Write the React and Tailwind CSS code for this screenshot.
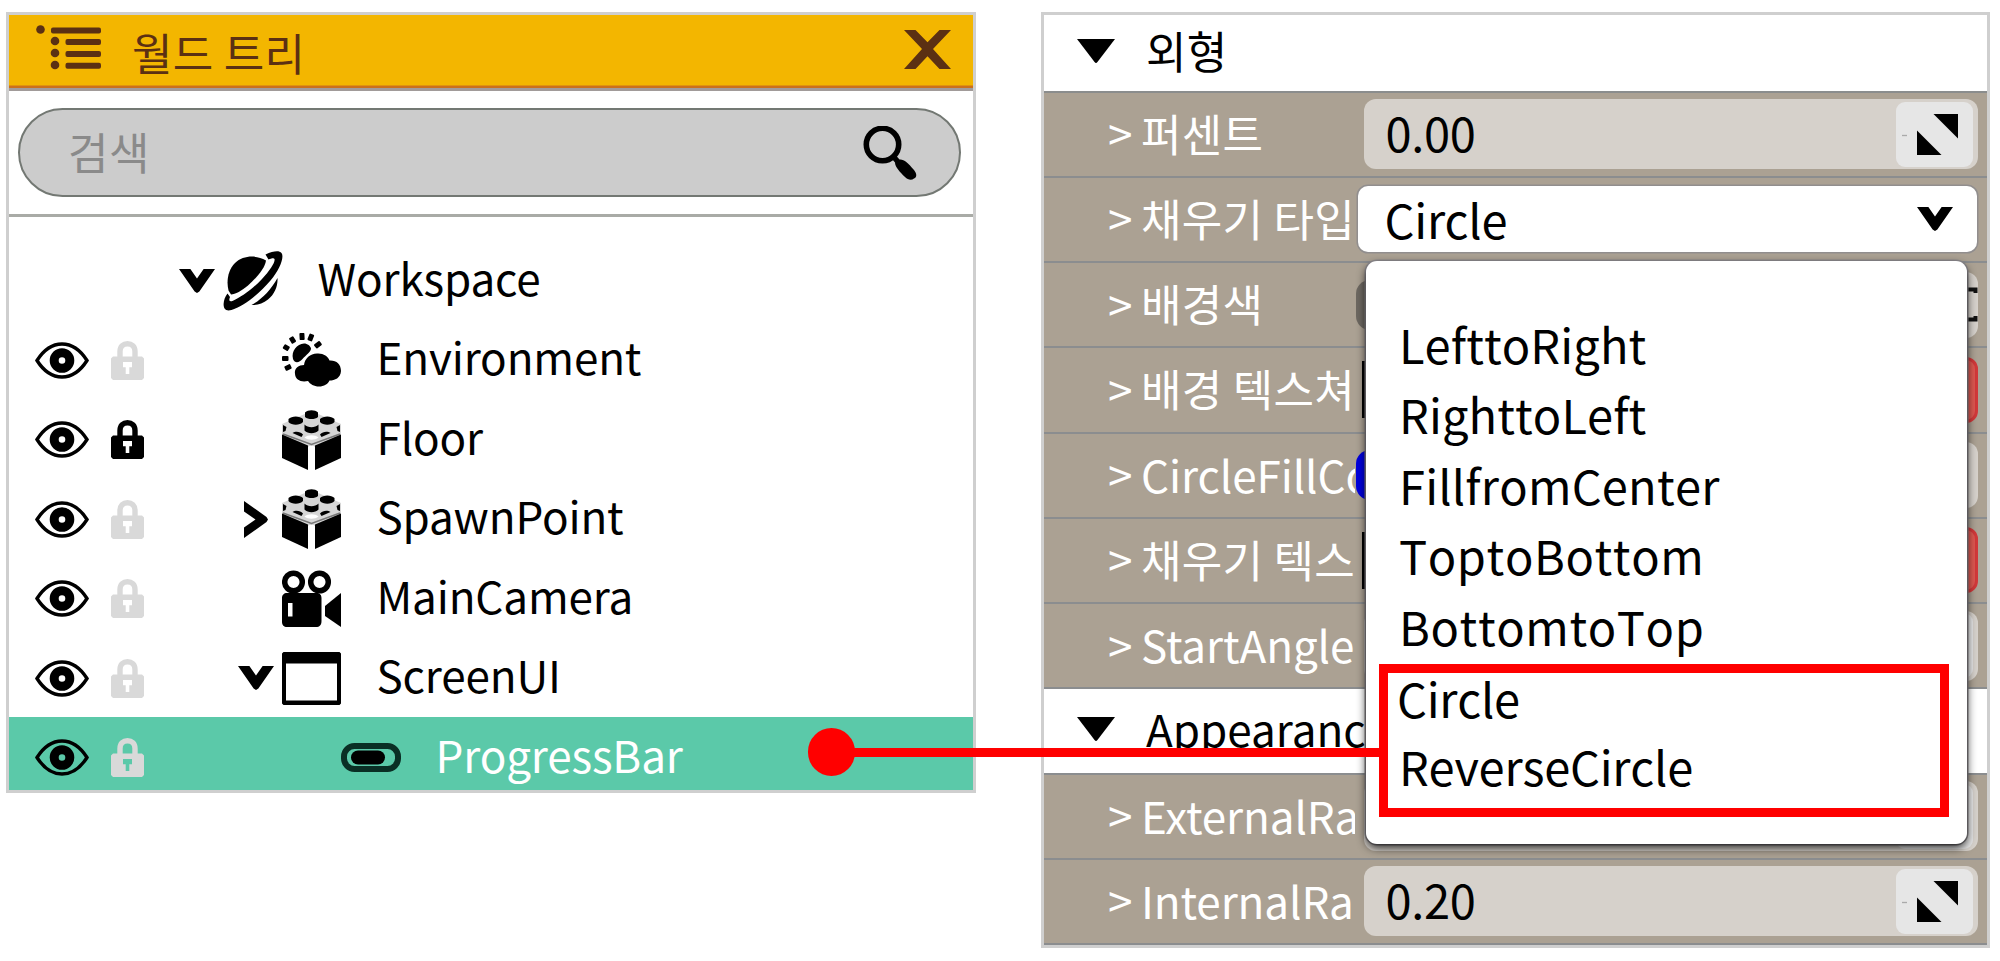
import React from "react";

const FONT = "font-['Noto_Sans_CJK_KR','Noto_Sans',sans-serif]";

const EyeIcon = () => (
  <svg className="block h-[37px] w-[54px]" viewBox="0 0 54 37">
    <path d="M2 18.5C9 7.500 18 2 27 2s18 5.500 25 16.500C45 29.500 36 35 27 35S9 29.500 2 18.500Z" fill="none" stroke="#000" strokeWidth="3.400" />
    <circle cx="27" cy="18.500" r="7.800" fill="none" stroke="#000" strokeWidth="9" />
  </svg>
);

const LockIcon = ({ color }) => (
  <svg className="block h-[39px] w-[33px]" viewBox="0 0 33 39">
    <path d="M9 17V10.500C9 5.500 12.200 2.700 16.500 2.700S24 5.500 24 10.500V17" fill="none" stroke={color} strokeWidth="5.400" />
    <path fillRule="evenodd" d="M2 15.500H31L33 17.500V37L31 39H2L0 37V17.500ZM12 21V26.200H14.700V33H18.300V26.200H21V21Z" fill={color} />
  </svg>
);

const ChevronDown = () => (
  <svg className="block h-[24px] w-[36px]" viewBox="0 0 38 24" preserveAspectRatio="none">
    <path d="M0 0H12L19 9.500L26 0H38L21.500 22.500L19 24L16.500 22.500Z" fill="#000" />
  </svg>
);

const ChevronRight = () => (
  <svg className="block h-[37px] w-[24px]" viewBox="0 0 24 37">
    <path d="M0 0L22.500 16L24 18.500L22.500 21L0 37V26.500L11.500 18.500L0 10.500Z" fill="#000" />
  </svg>
);

const PlanetIcon = () => (
  <svg className="block h-[60px] w-[60px]" viewBox="0 0 60 60">
    <path d="M5.500 39.500C3.200 30 5 19 12 12C20 4.500 33 3.500 43 9.500C42 17 34 26.500 25 34.500C19 39.500 12 43.500 8 43.500Z" fill="#000" />
    <path d="M42.500 3.500C50 .200 56 -.800 58.500 2C61.500 6 57 18 47.500 29.500C36 43 20 56 8.500 59C3 60.500 .500 58 .600 53C.800 49 2 46 4.500 42.500L7 46C5.500 50 6.500 51 10 49.700C18 46.500 30 37.500 39 28C47 19.500 52.500 11 51.500 8C51 6.500 48 7.500 45.500 8.500Z" fill="#000" />
    <path d="M54.500 27C55 35 51.500 43.500 45 48.500C40 52.500 34 54.500 28.500 54C38 49 48 39 54.500 27Z" fill="#000" />
  </svg>
);

const WeatherIcon = () => (
  <svg className="block h-[54px] w-[59px]" viewBox="0 0 59 54">
    <g fill="#000">
      <path d="M11 26C9 18 15 11 22 10.500C25.500 10.500 28.500 13 29 15.500C29 19 24 22 20.500 26C17.500 29.500 13 31 11 26Z" />
      <rect x="17.500" y="0" width="5" height="7" rx="1" transform="rotate(-3 20 3)" />
      <rect x="26.500" y="1" width="5" height="7" rx="1" transform="rotate(22 29 4)" />
      <rect x="34" y="8" width="5" height="7" rx="1" transform="rotate(52 36 11)" />
      <rect x="8" y="4" width="5" height="6.500" rx="1" transform="rotate(-32 10 7)" />
      <rect x="2" y="12" width="5" height="6" rx="1" transform="rotate(-58 4 15)" />
      <rect x="0" y="23" width="6.500" height="5" rx="1" />
      <rect x="3" y="32" width="6.500" height="5" rx="1" transform="rotate(-25 6 35)" />
      <path d="M13 41C12 35 17 32 22 32C23 25 28 21 35 20.500C41 20 46 23 47.500 27.500C54 27 59 31 59 38C58.500 45 53 47.500 47.500 47.500C46 51 42 53.500 37 53.500C32 53.500 28 51 26 48C19 49.500 13.500 47 13 41Z" />
    </g>
  </svg>
);

const BrickIcon = () => (
  <svg className="block h-[60px] w-[59px]" viewBox="0 0 59 60">
    <path d="M0 14L29.500 1L59 14V27L29.500 38L0 27Z" fill="#000" opacity="0.160" />
    <path d="M1 24L29.500 34.500L58 24" fill="none" stroke="#777" strokeWidth="1.600" />
    <g fill="#000">
      <path d="M23 2.500C26 -.500 33 -.500 36 2.500V7C33 9.700 26 9.700 23 7Z" />
      <path d="M6.500 9C9.500 5.500 18 5.500 21 9V12C18 15.500 9.500 15.500 6.500 12Z" />
      <path d="M38 9C41 5.500 49.500 5.500 52.500 9V12C49.500 15.500 41 15.500 38 12Z" />
      <path d="M22.500 14.500C26 18 33 18 36.500 14.500V20.500C33 24 26 24 22.500 20.500Z" />
      <path d="M1 15L4.500 17L3.500 21L1 22Z" />
      <path d="M58 15L54.500 17L55.500 21L58 22Z" />
      <path d="M10.500 23C13 21 18 21 21 24.500L19.500 27Z" />
      <path d="M48.500 23C46 21 41 21 38 24.500L39.500 27Z" />
      <path d="M0 24.500L26 35.500V60L0 48Z" />
      <path d="M59 24.500L33 35.500V60L59 48Z" />
    </g>
    <path d="M22.500 27.500C26 24.500 33 24.500 36.500 27.500C33 30.500 26 30.500 22.500 27.500Z" fill="#fff" />
    <path d="M26.800 36H32.200V60H26.800Z" fill="#fff" />
  </svg>
);

const CameraIcon = () => (
  <svg className="block h-[57px] w-[59px]" viewBox="0 0 59 57">
    <circle cx="11.500" cy="12" r="8.800" fill="none" stroke="#000" strokeWidth="5.500" />
    <circle cx="37.500" cy="12" r="8.800" fill="none" stroke="#000" strokeWidth="5.500" />
    <path fillRule="evenodd" d="M5 23H34C38 23 39.500 25 39.500 28V51C39.500 55 37.500 57 34 57H5C2 57 0 55 0 52V28C0 25 2 23 5 23ZM6 33V46.500H10.500V33Z" fill="#000" />
    <path d="M43 36L59 23V57L43 46Z" fill="#000" />
  </svg>
);

const WindowIcon = () => (
  <svg className="block h-[53px] w-[59px]" viewBox="0 0 59 53">
    <path fillRule="evenodd" d="M1.500 0H57.500L59 1.500V51.500L57.500 53H1.500L0 51.500V1.500ZM4 11.500V48.500H55V11.500Z" fill="#000" />
  </svg>
);

const ProgressIcon = () => (
  <svg className="block h-[29px] w-[60px]" viewBox="0 0 60 29">
    <rect x="3" y="3" width="54" height="23" rx="10.500" fill="none" stroke="#0a2f25" strokeWidth="6" />
    <rect x="10" y="7.500" width="34" height="14" rx="7" fill="#000" />
  </svg>
);

const ListIcon = () => (
  <svg className="block h-[46px] w-[65px]" viewBox="0 0 65 46">
    <g fill="#5b3013">
      <circle cx="4.500" cy="4.500" r="4.300" />
      <circle cx="19" cy="16" r="4.300" />
      <circle cx="19" cy="28" r="4.300" />
      <circle cx="19" cy="40" r="4.300" />
      <rect x="15" y="2.500" width="50" height="6" rx="2" />
      <rect x="29.500" y="14" width="35.500" height="6" rx="2" />
      <rect x="29.500" y="26" width="35.500" height="6" rx="2" />
      <rect x="29.500" y="37.800" width="35.500" height="6" rx="2" />
    </g>
  </svg>
);

const CloseIcon = () => (
  <svg className="block h-[39px] w-[47px]" viewBox="0 0 47 40" preserveAspectRatio="none">
    <path d="M0 0H11.500L23.500 12.500L35.500 0H47L29 19.500L47 40H35.500L23.500 27L11.500 40H0L18 19.500Z" fill="#5b3013" />
  </svg>
);

const SearchIcon = () => (
  <svg className="block h-[54px] w-[54px]" viewBox="0 0 54 54">
    <circle cx="19.500" cy="18.500" r="16.200" fill="none" stroke="#000" strokeWidth="5.600" />
    <path d="M29 33L33 29.500L36.500 33.500C41 33 45 37 51 44C54 48 54 51 51 52.500C48.500 54.500 45 54 42 51C37 46 32 41 32 36.500Z" fill="#000" />
  </svg>
);

const ExpandIcon = () => (
  <svg className="block h-[41px] w-[56px]" viewBox="0 0 56 41">
    <path d="M0 21.500H5" stroke="#aaa" strokeWidth="1.300" />
    <path d="M31.500 0H56V24.500Z" fill="#000" />
    <path d="M15 16.500L39.500 41H15Z" fill="#000" />
  </svg>
);

const Triangle = () => (
  <svg className="-mt-[4px] block h-[24px] w-[38px]" viewBox="0 0 39 25" preserveAspectRatio="none">
    <path d="M0 0H39L21 24Q19.500 26 18 24Z" fill="#000" />
  </svg>
);

const INDENT = ["w-[33px]", "w-[92px]", "w-[151px]"];

const TREE = [
  { label: "Workspace", depth: 0, arrow: "down", Icon: PlanetIcon, bare: true },
  { label: "Environment", depth: 1, Icon: WeatherIcon },
  { label: "Floor", depth: 1, Icon: BrickIcon, locked: true },
  { label: "SpawnPoint", depth: 1, arrow: "right", Icon: BrickIcon },
  { label: "MainCamera", depth: 1, Icon: CameraIcon },
  { label: "ScreenUI", depth: 1, arrow: "down", Icon: WindowIcon },
  { label: "ProgressBar", depth: 2, Icon: ProgressIcon, selected: true },
];

function TreeRow({ label, depth, arrow, Icon, bare, locked, selected }) {
  return (
    <div className={`flex h-[79.5px] shrink-0 items-center pl-[26px] ${selected ? "bg-[#5bc9a9] text-white" : "text-black"}`}>
      <div className="flex w-[109px] shrink-0 items-center justify-between pt-[3px]">
        {!bare && <EyeIcon />}
        {!bare && <LockIcon color={locked ? "#000" : "#d9d9d9"} />}
      </div>
      <div className={`shrink-0 ${INDENT[depth]}`} />
      <div className="flex w-[46px] shrink-0 items-center justify-center pr-[6px] pt-[3px]">
        {arrow === "down" && <ChevronDown />}
        {arrow === "right" && <ChevronRight />}
      </div>
      <div className="flex w-[60px] shrink-0 items-center pt-[3px]"><Icon /></div>
      <span className="-mt-[5px] ml-[34.5px] whitespace-nowrap text-[44px] leading-[74px] tracking-[-0.15px]">{label}</span>
    </div>
  );
}

function WorldTree() {
  return (
    <section className="flex h-[781px] w-[970px] shrink-0 flex-col overflow-hidden border-[3px] border-[#cfcfcf] bg-white">
      <header className="flex h-[76px] shrink-0 items-center border-b-[3px] border-[#a19b99] bg-[#f3b600] pl-[27px] pr-[22px] shadow-[inset_0_-2.5px_0_#cb701c]">
        <div className="mb-[8px]"><ListIcon /></div>
        <h1 className="ml-[31px] text-[44px] leading-[70px] tracking-[0.3px] text-[#5b3013]">월드 트리</h1>
        <button className="mb-[5px] ml-auto"><CloseIcon /></button>
      </header>
      <div className="h-[126px] shrink-0 border-b-[3px] border-[#a9aba6] pl-[9px] pr-[12px] pt-[17px]">
        <div className="flex h-[89px] items-center justify-between rounded-full border-[2px] border-[#737873] bg-[#cccccc] pl-[48px] pr-[42px]">
          <span className="-mt-[3px] text-[44px] leading-[80px] tracking-[0.5px] text-[#8a8a8a]">검색</span>
          <SearchIcon />
        </div>
      </div>
      <div className="flex flex-col pt-[22.500px]">
        {TREE.map((n) => <TreeRow key={n.label} {...n} />)}
      </div>
    </section>
  );
}

function SectionHead({ children, hangul }) {
  return (
    <div className="flex h-full items-center bg-white pl-[33px]">
      <Triangle />
      <span className={`-mt-[5px] whitespace-nowrap text-[44px] leading-[74px] text-black ${hangul ? "ml-[31px] tracking-[0.3px]" : "ml-[31px]"}`}>{children}</span>
    </div>
  );
}

function NumberField({ value }) {
  return (
    <div className="flex h-[70px] w-[614px] items-center justify-between rounded-[12px] bg-[#d6d1cb] pl-[22px] pr-[5px]">
      <span className="-mt-[5px] text-[47px] leading-[65px] tracking-[-0.3px] text-black">{value}</span>
      <div className="flex h-[65px] w-[77px] items-center rounded-[9px] bg-[#e6e6e6] pl-[6px]"><ExpandIcon /></div>
    </div>
  );
}

function SelectField({ value }) {
  return (
    <div className="-ml-[6px] flex h-[66px] w-[619px] items-center justify-between rounded-[10px] bg-white pl-[27px] pr-[24px] shadow-[0_0_0_1.5px_#918e8e]">
      <span className="text-[47px] leading-[66px] tracking-[-0.2px] text-black">{value}</span>
      <ChevronDown />
    </div>
  );
}

function ColorField({ dark }) {
  return (
    <div className="-ml-[8px] flex items-center">
      <div className={`h-[50px] w-[60px] rounded-[14px] ${dark ? "bg-[#6d6861]" : "bg-[#0000dd]"}`} />
      <div className="flex h-[66px] w-[562px] items-center justify-end rounded-[12px] bg-[#d6d1cb]">
        {dark && (
          <svg className="block h-[37px] w-[20px]" viewBox="0 0 20 37">
            <path d="M4 3.500H17.500V7M4 33.500H17.500V30" fill="none" stroke="#111" strokeWidth="4" />
          </svg>
        )}
      </div>
    </div>
  );
}

function TextureField() {
  return (
    <div className="-ml-[2px] flex w-[616px] items-center justify-between">
      <div className="h-[57px] w-[60px] bg-black" />
      <div className="h-[66px] w-[70px] rounded-[12px] border-[3px] border-[#d2383a] bg-[#dd5750]" />
    </div>
  );
}

function PropRow({ label, hangul, children }) {
  return (
    <div className="flex h-full items-center bg-[#aba193] pl-[64px]">
      <span className="-mt-[4px] w-[33px] shrink-0 text-[44px] leading-[76px] text-white">&gt;</span>
      <span className={`-mt-[3px] w-[214px] shrink-0 overflow-hidden whitespace-nowrap text-[44px] leading-[76px] text-white ${hangul ? "tracking-[0.3px]" : "tracking-[-0.1px]"}`}>{label}</span>
      <div className="ml-[8.5px] w-[614px] shrink-0">{children}</div>
    </div>
  );
}

const PROPS = [
  { label: "퍼센트", hangul: true, field: <NumberField value="0.00" /> },
  { label: "채우기 타입", hangul: true, field: <SelectField value="Circle" /> },
  { label: "배경색", hangul: true, field: <ColorField dark /> },
  { label: "배경 텍스쳐", hangul: true, field: <TextureField /> },
  { label: "CircleFillColor", field: <ColorField /> },
  { label: "채우기 텍스쳐", hangul: true, field: <TextureField /> },
  { label: "StartAngle", field: <NumberField value="" /> },
  { label: "Appearance", head: true },
  { label: "ExternalRadius", field: <NumberField value="" /> },
  { label: "InternalRadius", field: <NumberField value="0.20" /> },
];

const OPTIONS = [
  { label: "LefttoRight", cls: "h-[70.3px] tracking-[0.1px]" },
  { label: "RighttoLeft", cls: "h-[70.3px] tracking-[0.1px]" },
  { label: "FillfromCenter", cls: "h-[70.3px] tracking-[0.2px]" },
  { label: "ToptoBottom", cls: "h-[70.3px] tracking-[0.6px]" },
  { label: "BottomtoTop", cls: "h-[71px] tracking-[0.6px]" },
  { label: "Circle", cls: "-ml-[2px] mt-[2px] h-[69px] tracking-[-0.3px]" },
  { label: "ReverseCircle", cls: "h-[68px] tracking-[-0.25px]" },
];

function Menu() {
  return (
    <ul className="absolute left-[325px] top-[249px] flex h-[583px] w-[601px] flex-col rounded-[11px] bg-white pl-[33px] pt-[48px] text-black shadow-[0_4px_10px_rgba(0,0,0,0.8),0_0_0_1.5px_#918e92]">
      {OPTIONS.map((o) => (
        <li key={o.label} className={`flex shrink-0 items-center whitespace-nowrap text-[47px] leading-[70px] [font-kerning:none] ${o.cls}`}>{o.label}</li>
      ))}
    </ul>
  );
}

function Properties() {
  return (
    <section className="relative ml-[65px] h-[936px] w-[949px] shrink-0">
      <div className="h-full overflow-hidden border-[3px] border-[#cfcfcf]">
        <div className="h-[77.5px] border-b-[2px] border-[#8b8d8d]"><SectionHead hangul>외형</SectionHead></div>
        {PROPS.map((p) => (
          <div key={p.label} className="h-[85.25px] border-b-[2px] border-[#8b8d8f]">
            {p.head ? <SectionHead>{p.label}</SectionHead> : <PropRow label={p.label} hangul={p.hangul}>{p.field}</PropRow>}
          </div>
        ))}
      </div>
      <Menu />
    </section>
  );
}

export default function App() {
  return (
    <main className={`relative flex h-[961px] w-[2000px] items-start overflow-hidden bg-white pl-[6px] pt-[12px] ${FONT}`}>
      <WorldTree />
      <Properties />
      <div className="absolute left-[808px] top-[728px] h-[48px] w-[47px] rounded-full bg-[#ff0000]" />
      <div className="absolute left-[840px] top-[748px] h-[9px] w-[545px] bg-[#ff0000]" />
      <div className="absolute left-[1379px] top-[664px] h-[153px] w-[570px] border-[9px] border-[#ff0000]" />
    </main>
  );
}
